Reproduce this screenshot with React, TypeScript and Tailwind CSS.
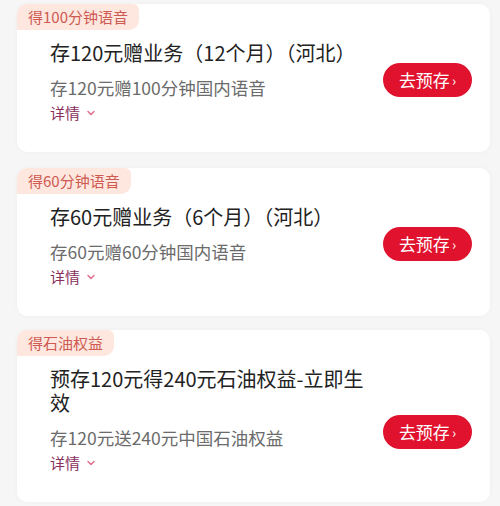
import { ReactNode } from 'react'

type Offer = {
  tag: string
  title: string
  desc: string
  btnClass: string
  cardClass: string
}

const offers: Offer[] = [
  {
    tag: '得100分钟语音',
    title: '存120元赠业务（12个月）（河北）',
    desc: '存120元赠100分钟国内语音',
    btnClass: 'mt-[6px]',
    cardClass: 'mt-[4px]',
  },
  {
    tag: '得60分钟语音',
    title: '存60元赠业务（6个月）（河北）',
    desc: '存60元赠60分钟国内语音',
    btnClass: 'mt-[6px]',
    cardClass: 'mt-[16px]',
  },
  {
    tag: '得石油权益',
    title: '预存120元得240元石油权益-立即生效',
    desc: '存120元送240元中国石油权益',
    btnClass: 'mt-[34px]',
    cardClass: 'mt-[14px]',
  },
]

function Chevron() {
  return (
    <svg width="10" height="10" viewBox="0 0 10 10" className="ml-[6px]">
      <path d="M2 3.5 L5 6.5 L8 3.5" fill="none" stroke="#e0708e" strokeWidth="1.5" strokeLinecap="round" strokeLinejoin="round" />
    </svg>
  )
}

function Card({ offer, children }: { offer: Offer; children?: ReactNode }) {
  return (
    <div className={`bg-white rounded-[10px] shadow-[0_0_4px_rgba(0,0,0,0.04)] pb-[28px] ${offer.cardClass}`}>
      <div className="flex">
        <div className="h-[26px] px-[11px] flex items-center bg-[#fde7de] text-[#cf5a52] text-[15px] rounded-tl-[10px] rounded-br-[10px] rounded-tr-[6px]">
          {offer.tag}
        </div>
      </div>
      <div className="flex items-center pl-[33px] pr-[18px]">
        <div className="flex-1 pr-[10px]">
          <div className="mt-[11px] text-[20px] leading-[24px] text-[#222] max-w-[322px]">{offer.title}</div>
          <div className="mt-[11px] text-[17.5px] leading-[24px] text-[#6b6b6b]">{offer.desc}</div>
          <div className="mt-[2px] flex items-center text-[15px] leading-[22px] text-[#8a2f5c]">
            详情
            <Chevron />
          </div>
        </div>
        <button
          className={`w-[89px] h-[34px] rounded-full bg-[#e0122e] text-white text-[17px] flex items-center justify-center shrink-0 ${offer.btnClass}`}
        >
          去预存<span className="text-[14px] ml-[2px]">›</span>
        </button>
        {children}
      </div>
    </div>
  )
}

export default function App() {
  return (
    <div
      className="w-[500px] h-[506px] overflow-hidden bg-[#f6f6f6] pl-[17px] pr-[10px]"
      style={{ fontFamily: '"Noto Sans CJK SC", "Noto Sans", sans-serif' }}
    >
      <div className="flex flex-col">
        {offers.map((o) => (
          <Card key={o.tag} offer={o} />
        ))}
      </div>
    </div>
  )
}
